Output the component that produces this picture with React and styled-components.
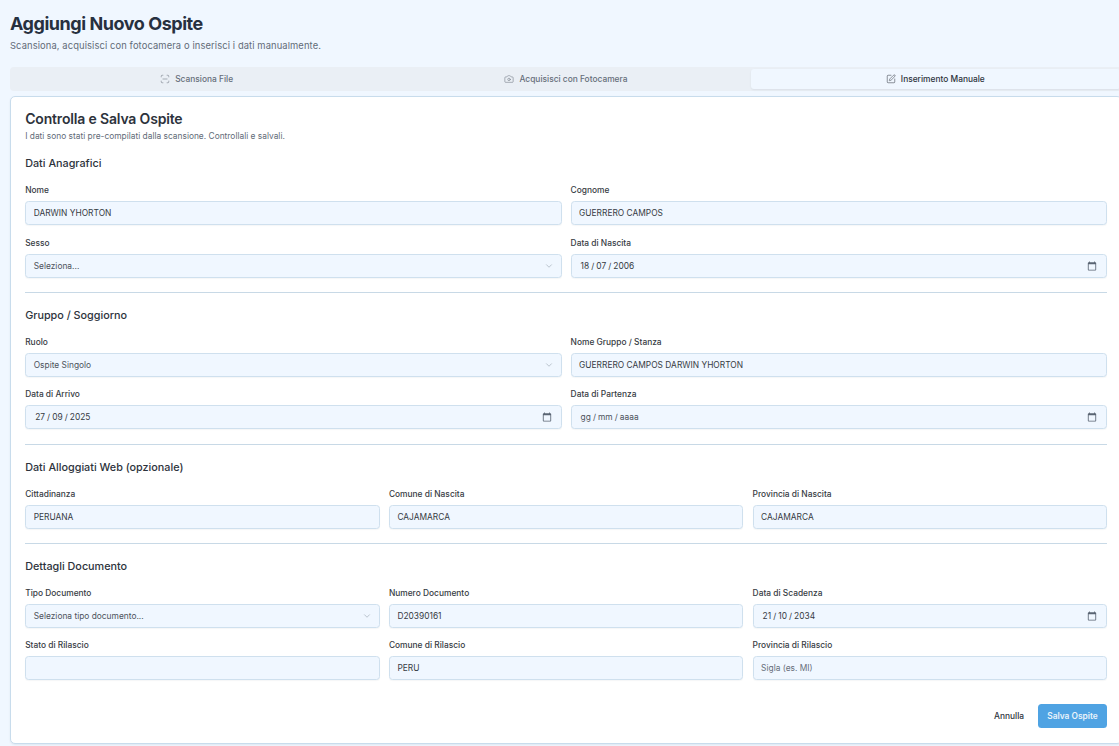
import React from "react";
import styled, { createGlobalStyle } from "styled-components";
import { ScanLine, Camera, SquarePen, ChevronDown } from "lucide-react";

const Global = createGlobalStyle`
  html, body { margin: 0; padding: 0; width: 1119px; height: 746px; overflow: hidden; background: #f0f7ff; }
  * { box-sizing: border-box; }
  body { font-family: Inter, "Liberation Sans", sans-serif; color: #27303f; }
`;
const Page = styled.div`
  width: 1112px; margin-left: 10px; padding-top: 13px;
`;
const Title = styled.h1`
  margin: 0; font-size: 18px; line-height: 21px; font-weight: 700; letter-spacing: -0.45px; color: #27303f;
`;
const Subtitle = styled.p`
  margin: 6px 0 0; font-size: 9.4px; line-height: 12px; color: #626b78; letter-spacing: 0.1px;
`;
const Tabs = styled.div`
  margin-top: 15px; height: 24px; padding: 2px; background: #eaeff5; border-radius: 4px;
  display: grid; grid-template-columns: repeat(3, 1fr);
`;
const Tab = styled.div`
  display: flex; align-items: center; justify-content: center; gap: 5px;
  font-size: 8.4px; font-weight: 500; border-radius: 3px;
  color: ${p => (p.$active ? "#2d333c" : "#666e7a")};
  background: ${p => (p.$active ? "#f0f7ff" : "transparent")};
  box-shadow: ${p => (p.$active ? "0 1px 2px rgba(30,50,80,.08)" : "none")};
`;
const Card = styled.section`
  margin-top: 5px; height: 648px; padding: 13px 14px 15px 14.2px; background: #fff;
  border: 1px solid #c8dcec; border-radius: 5px; box-shadow: 0 1px 2px rgba(30,50,80,.08);
`;
const CardHeader = styled.header`
  margin-bottom: 15px;
`;
const CardTitle = styled.h2`
  margin: 0; font-size: 14px; line-height: 17px; font-weight: 600; letter-spacing: -0.17px; color: #2d333c;
`;
const CardSub = styled.p`
  margin: 4px 0 0; font-size: 8.4px; line-height: 11px; color: #626b78;
`;
const Section = styled.div`
  padding-bottom: ${p => (p.$last ? "0" : "14.2px")};
  margin-bottom: ${p => (p.$last ? "0" : "16px")};
  border-bottom: ${p => (p.$last ? "none" : "1px solid #c8d9e6")};
`;
const SectionTitle = styled.h3`
  margin: 0 0 14px; font-size: 10.8px; line-height: 14px; font-weight: 450; color: #2d333c;
`;
const Grid = styled.div`
  display: grid; grid-template-columns: repeat(${p => p.$cols}, minmax(0, 1fr));
  row-gap: 12.6px; column-gap: ${p => (p.$cols === 2 ? "9px" : "9.33px")};
`;
const Field = styled.div`
  display: flex; flex-direction: column; gap: 5px;
`;
const Label = styled.label`
  font-size: 8.4px; line-height: 11px; font-weight: 450; color: #363b43;
`;
const boxStyle = `
  height: 24px; width: 100%; padding: 0 7.5px; background: #f0f7ff;
  border: 1px solid #cfe0ee; border-radius: 3.5px;
  font-family: inherit; font-size: 8.4px; color: #363b43;
  box-shadow: 0 1px 1px rgba(30,50,80,.04);
`;
const TextInput = styled.input`
  ${boxStyle}
  outline: none;
  &::placeholder { color: #666e7a; opacity: 1; }
`;
const Control = styled.div`
  ${boxStyle}
  display: flex; align-items: center; justify-content: space-between;
  padding-left: ${p => (p.$date ? "9px" : "7.5px")};
  padding-right: ${p => (p.$date ? "9px" : "7px")};
  word-spacing: ${p => (p.$date ? "-0.3px" : "0")};
  color: ${p => (p.$muted ? "#4d535c" : "#363b43")};
  svg { flex: none; }
`;
const Actions = styled.div`
  margin-top: 24px; display: flex; justify-content: flex-end; align-items: center; gap: 14px;
`;
const Cancel = styled.button`
  border: 0; background: none; padding: 0; font-family: inherit; font-size: 8.4px; font-weight: 450; color: #2d333c;
`;
const Save = styled.button`
  height: 24px; width: 69px; border: 0; border-radius: 3.5px; background: #4fa3e3; color: #e9f3fb;
  font-family: inherit; font-size: 8.4px; font-weight: 600;
`;

const CalendarGlyph = () => (
  <svg width="10" height="10" viewBox="0 0 24 24" fill="#5a6573" aria-hidden="true">
    <path d="M20 3h-1V1h-2v2H7V1H5v2H4c-1.1 0-2 .9-2 2v16c0 1.1.9 2 2 2h16c1.1 0 2-.9 2-2V5c0-1.1-.9-2-2-2zm0 18H4V8h16v13z" />
  </svg>
);
const Input = ({ label, value, placeholder }) => (
  <Field><Label>{label}</Label><TextInput readOnly value={value || ""} placeholder={placeholder} /></Field>
);
const SelectField = ({ label, value }) => (
  <Field><Label>{label}</Label>
    <Control $muted>{value}<ChevronDown size={10} color="#9aa5b1" strokeWidth={1.5} /></Control>
  </Field>
);
const DateField = ({ label, value, muted }) => (
  <Field><Label>{label}</Label>
    <Control $date $muted={muted}>{value}<CalendarGlyph /></Control>
  </Field>
);

export default function App() {
  return (
    <Page>
      <Global />
      <Title>Aggiungi Nuovo Ospite</Title>
      <Subtitle>Scansiona, acquisisci con fotocamera o inserisci i dati manualmente.</Subtitle>
      <Tabs>
        <Tab><ScanLine size={10} strokeWidth={1.25} />Scansiona File</Tab>
        <Tab><Camera size={10} strokeWidth={1.25} />Acquisisci con Fotocamera</Tab>
        <Tab $active><SquarePen size={10} strokeWidth={1.25} />Inserimento Manuale</Tab>
      </Tabs>
      <Card>
        <CardHeader>
          <CardTitle>Controlla e Salva Ospite</CardTitle>
          <CardSub>I dati sono stati pre-compilati dalla scansione. Controllali e salvali.</CardSub>
        </CardHeader>
        <Section>
          <SectionTitle>Dati Anagrafici</SectionTitle>
          <Grid $cols={2}>
            <Input label="Nome" value="DARWIN YHORTON" />
            <Input label="Cognome" value="GUERRERO CAMPOS" />
            <SelectField label="Sesso" value="Seleziona..." />
            <DateField label="Data di Nascita" value="18 / 07 / 2006" />
          </Grid>
        </Section>
        <Section>
          <SectionTitle>Gruppo / Soggiorno</SectionTitle>
          <Grid $cols={2}>
            <SelectField label="Ruolo" value="Ospite Singolo" />
            <Input label="Nome Gruppo / Stanza" value="GUERRERO CAMPOS DARWIN YHORTON" />
            <DateField label="Data di Arrivo" value="27 / 09 / 2025" />
            <DateField label="Data di Partenza" value="gg / mm / aaaa" muted />
          </Grid>
        </Section>
        <Section>
          <SectionTitle>Dati Alloggiati Web (opzionale)</SectionTitle>
          <Grid $cols={3}>
            <Input label="Cittadinanza" value="PERUANA" />
            <Input label="Comune di Nascita" value="CAJAMARCA" />
            <Input label="Provincia di Nascita" value="CAJAMARCA" />
          </Grid>
        </Section>
        <Section $last>
          <SectionTitle>Dettagli Documento</SectionTitle>
          <Grid $cols={3}>
            <SelectField label="Tipo Documento" value="Seleziona tipo documento..." />
            <Input label="Numero Documento" value="D20390161" />
            <DateField label="Data di Scadenza" value="21 / 10 / 2034" />
            <Input label="Stato di Rilascio" />
            <Input label="Comune di Rilascio" value="PERU" />
            <Input label="Provincia di Rilascio" placeholder="Sigla (es. MI)" />
          </Grid>
        </Section>
        <Actions>
          <Cancel>Annulla</Cancel>
          <Save>Salva Ospite</Save>
        </Actions>
      </Card>
    </Page>
  );
}
